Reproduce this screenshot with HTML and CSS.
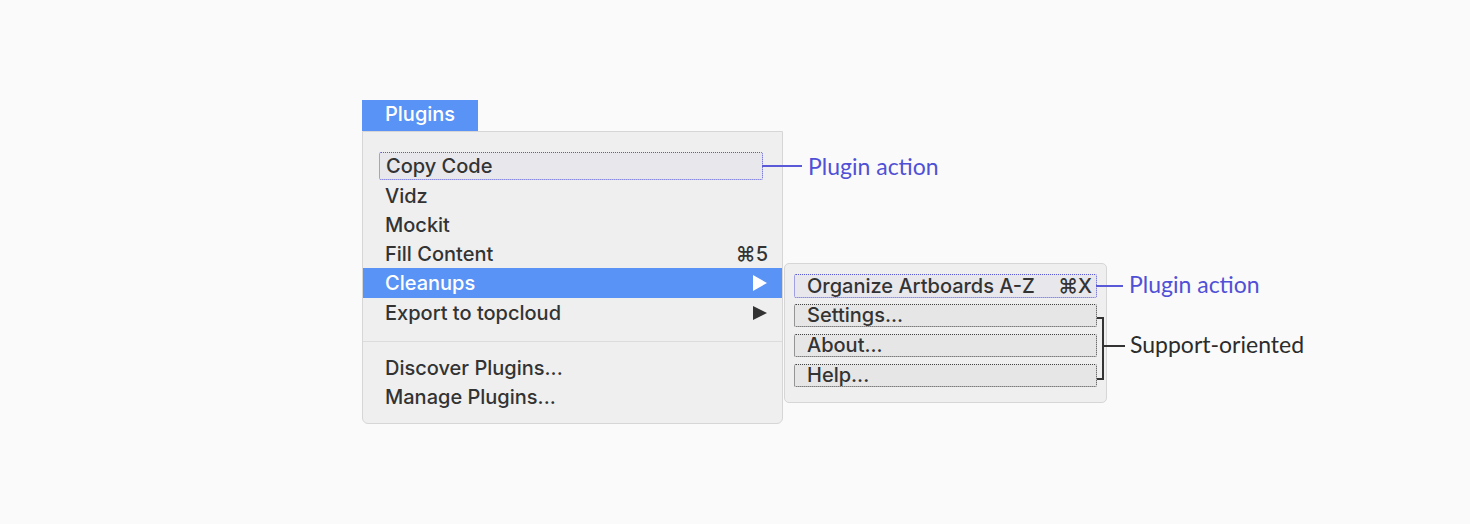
FILE: index.html
```html
<!DOCTYPE html>
<html>
<head>
<meta charset="utf-8">
<link rel="stylesheet" href="styles.css">
</head>
<body>
<div class="stage">
  <div class="menu-col">
    <div class="tab">Plugins</div>
    <div class="menu">
      <div class="row boxed-blue">
        <span>Copy Code</span>
        <div class="callout"><i class="line"></i><span class="note blue">Plugin action</span></div>
      </div>
      <div class="row"><span>Vidz</span></div>
      <div class="row"><span>Mockit</span></div>
      <div class="row"><span>Fill Content</span><span class="key">⌘5</span></div>
      <div class="row active">
        <span>Cleanups</span><span class="arrow"></span>
        <div class="submenu">
          <div class="sub-row boxed-blue">
            <span>Organize Artboards A-Z</span><span class="key">⌘X</span>
            <div class="callout short"><i class="line"></i><span class="note blue">Plugin action</span></div>
          </div>
          <div class="group">
            <div class="sub-row boxed-gray"><span>Settings...</span></div>
            <div class="sub-row boxed-gray"><span>About...</span></div>
            <div class="sub-row boxed-gray"><span>Help...</span></div>
            <div class="bracket"></div>
            <div class="callout bracket-call"><i class="line dark"></i><span class="note">Support-oriented</span></div>
          </div>
        </div>
      </div>
      <div class="row"><span>Export to topcloud</span><span class="arrow dark"></span></div>
      <div class="sep"></div>
      <div class="row"><span>Discover Plugins...</span></div>
      <div class="row"><span>Manage Plugins...</span></div>
    </div>
  </div>
</div>
</body>
</html>
```

FILE: styles.css
```css
html, body {
  margin: 0;
  padding: 0;
  background: #fafafa;
}
body {
  font-family: Inter, "Liberation Sans", sans-serif;
  color: #333;
}
.stage {
  padding: 100px 0 0 362px;
}
.menu-col {
  width: 421px;
  display: flex;
  flex-direction: column;
}
.tab {
  width: 116px;
  height: 31px;
  box-sizing: border-box;
  background: #5993f6;
  color: #fff;
  font-size: 20px;
  font-weight: 500;
  line-height: 29px;
  padding-left: 23px;
  letter-spacing: 0;
}
.menu {
  background: #efefef;
  border: 1px solid #d6d6d6;
  border-radius: 0 0 6px 6px;
  padding: 20px 0 12px;
  display: flex;
  flex-direction: column;
}
.row {
  position: relative;
  height: 29px;
  display: flex;
  align-items: center;
  justify-content: space-between;
  padding: 0 14px 0 22px;
  font-size: 20px;
  font-weight: 500;
  letter-spacing: 0;
}
.row.boxed-blue {
  margin: 0 19px 0 16px;
  padding: 0 6px;
  height: 28px;
  box-sizing: border-box;
  margin-bottom: 1px;
}
.boxed-blue {
  border: 1px dotted #5a5ad8;
  background: #e7e7ec;
  border-radius: 2px;
}
.boxed-gray {
  border: 1px dotted #444;
  background: #e6e6e6;
  border-radius: 2px;
}
.row.active {
  background: #5993f6;
  color: #fff;
  height: 30px;
}
.key {
  font-size: 20px;
}
.arrow {
  width: 0;
  height: 0;
  border-top: 8px solid transparent;
  border-bottom: 8px solid transparent;
  border-left: 14px solid #fff;
  margin-right: 1px;
}
.arrow.dark {
  border-left-color: #333;
  border-top-width: 7px;
  border-bottom-width: 7px;
}
.sep {
  height: 1px;
  background: #dcdcdc;
  margin: 14px 0 11px;
}
.callout {
  position: absolute;
  left: 100%;
  top: 50%;
  transform: translateY(-50%);
  display: flex;
  align-items: center;
  gap: 6px;
  white-space: nowrap;
}
.line {
  display: block;
  width: 40px;
  height: 2px;
  background: #5a5ad8;
}
.line.dark {
  background: #333;
  width: 21px;
}
.callout.short .line {
  width: 27px;
}
.note {
  font-family: Lato, "Open Sans", sans-serif;
  font-size: 23px;
  font-weight: 400;
  letter-spacing: 0;
  color: #2c2c2c;
  line-height: 26px;
}
.callout.short .note,
.callout.bracket-call .note {
  padding-bottom: 4px;
}
.note.blue {
  color: #5050d6;
}
.submenu {
  position: absolute;
  left: 421px;
  top: -5px;
  width: 323px;
  box-sizing: border-box;
  background: #efefef;
  border: 1px solid #d6d6d6;
  border-radius: 5px;
  padding: 10px 9px 15px;
  color: #333;
  display: flex;
  flex-direction: column;
  gap: 6px;
}
.sub-row {
  position: relative;
  height: 24px;
  box-sizing: border-box;
  display: flex;
  align-items: center;
  justify-content: space-between;
  padding: 0 4px 0 12px;
  font-size: 20px;
  font-weight: 500;
  letter-spacing: 0;
  line-height: 1;
}
.group {
  position: relative;
  display: flex;
  flex-direction: column;
  gap: 7px;
}
.group .sub-row {
  height: 23px;
  align-items: flex-start;
  padding-top: 0;
}
.bracket {
  position: absolute;
  left: 100%;
  top: 13px;
  width: 7px;
  height: 63px;
  border: 2px solid #333;
  border-left: none;
  box-sizing: border-box;
}
.callout.bracket-call {
  left: calc(100% + 7px);
  gap: 5px;
}
```
